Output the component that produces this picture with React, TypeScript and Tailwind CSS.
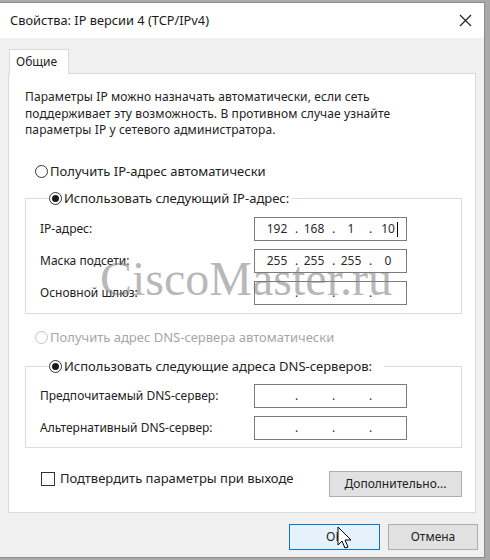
import React from "react";

const font = { fontFamily: '"Noto Sans", "Liberation Sans", Arial, sans-serif' };

function Radio({ checked, disabled }: { checked?: boolean; disabled?: boolean }) {
  return (
    <span
      className={`flex h-[13px] w-[13px] shrink-0 items-center justify-center rounded-full border ${
        disabled ? "border-[#c4c4c4]" : "border-[#333]"
      } bg-white`}
    >
      {checked && <span className="h-[7px] w-[7px] rounded-full bg-[#1a1a1a]" />}
    </span>
  );
}

function IpBox({ values, caret }: { values: string[]; caret?: boolean }) {
  return (
    <div className="flex h-[24px] w-[153px] items-center border border-[#7a7a7a] bg-white pl-[4px] text-[12px] text-[#2a2a2a]">
      {values.map((v, i) => (
        <React.Fragment key={i}>
          {i > 0 && <span className="w-[1px] text-center">.</span>}
          <span className="relative w-[36px] text-center">
            {v}
            {i === 3 && caret && (
              <span className="absolute right-[8px] top-[2px] h-[15px] w-px bg-black" />
            )}
          </span>
        </React.Fragment>
      ))}
    </div>
  );
}

function Row({ label, values, caret }: { label: string; values: string[]; caret?: boolean }) {
  return (
    <div className="grid h-[24px] grid-cols-[214px_153px] items-center">
      <span className="text-[12px] text-[#222]">{label}</span>
      <IpBox values={values} caret={caret} />
    </div>
  );
}

export default function App() {
  return (
    <div className="relative h-[560px] w-[490px] overflow-hidden bg-[#a9a9a9] pt-[2px]" style={font}>
      <div className="flex h-[556px] w-[485px] flex-col border border-l-0 border-[#8c8c8c] bg-[#f0f0f0]">
        {/* title bar */}
        <div className="flex h-[35px] items-center justify-between bg-white pl-[10px] pr-[12px]">
          <span className="text-[12.8px] text-[#1a1a1a]">Свойства: IP версии 4 (TCP/IPv4)</span>
          <svg width="13" height="13" viewBox="0 0 13 13">
            <path d="M1 1 L12 12 M12 1 L1 12" stroke="#222" strokeWidth="1.2" />
          </svg>
        </div>

        {/* body */}
        <div className="flex flex-1 flex-col pl-[8px] pr-[8px] pt-[11px]">
          <div className="flex">
            <div className="z-10 -mb-px ml-[1px] flex h-[25px] w-[60px] items-center border border-b-0 border-[#d9d9d9] bg-white pl-[6px] text-[12px] text-[#222]">
              Общие
            </div>
          </div>
          <div className="flex h-[440px] flex-col border border-[#d9d9d9] bg-white pl-[16px] pr-[13px] pt-[15px]">
            <p className="text-[12px] leading-[16.5px] tracking-[0.1px] text-[#222]">
              Параметры IP можно назначать автоматически, если сеть
              <br />
              поддерживает эту возможность. В противном случае узнайте
              <br />
              параметры IP у сетевого администратора.
            </p>

            <div className="ml-[10px] mt-[25px] flex h-[16px] items-center gap-[2px] text-[13px] text-[#222]">
              <Radio />
              <span>Получить IP-адрес автоматически</span>
            </div>

            <fieldset className="mt-[11px] border border-[#dcdcdc] pb-[8px] pl-[14px]">
              <legend className="ml-[9px] flex h-[16px] items-center gap-[2px] pr-[2px] text-[13px] text-[#222]">
                <Radio checked />
                <span>Использовать следующий IP-адрес:</span>
              </legend>
              <div className="flex flex-col gap-[8px] pt-[10px]">
                <Row label="IP-адрес:" values={["192", "168", "1", "10"]} caret />
                <Row label="Маска подсети:" values={["255", "255", "255", "0"]} />
                <Row label="Основной шлюз:" values={["", "", "", ""]} />
              </div>
            </fieldset>

            <div className="ml-[10px] mt-[16px] flex h-[16px] items-center gap-[2px] text-[13px] text-[#a6a6a6]">
              <Radio disabled />
              <span>Получить адрес DNS-сервера автоматически</span>
            </div>

            <fieldset className="mt-[13px] border border-[#dcdcdc] pb-[7px] pl-[14px]">
              <legend className="ml-[9px] flex h-[16px] items-center gap-[2px] pr-[12px] text-[13px] text-[#222]">
                <Radio checked />
                <span>Использовать следующие адреса DNS-серверов:</span>
              </legend>
              <div className="flex flex-col gap-[8px] pt-[9px]">
                <Row label="Предпочитаемый DNS-сервер:" values={["", "", "", ""]} />
                <Row label="Альтернативный DNS-сервер:" values={["", "", "", ""]} />
              </div>
            </fieldset>

            <div className="mt-[23px] flex items-start justify-between">
              <div className="ml-[16px] flex h-[16px] items-center gap-[5px] text-[13px] text-[#222]">
                <span className="h-[14px] w-[14px] shrink-0 border border-[#333] bg-white" />
                <span>Подтвердить параметры при выходе</span>
              </div>
              <button className="flex h-[26px] w-[133px] items-center justify-center border border-[#adadad] bg-[#e1e1e1] text-[12px] text-[#222]">
                Дополнительно...
              </button>
            </div>
          </div>

          <div className="-mr-[2px] mt-[11px] flex justify-end gap-[8px]">
            <button className="flex h-[26px] w-[91px] items-center justify-center border border-[#0078d7] bg-[#e5f1fb] text-[12px] text-[#222]">
              OK
            </button>
            <button className="flex h-[26px] w-[90px] items-center justify-center border border-[#adadad] bg-[#e1e1e1] text-[12px] text-[#222]">
              Отмена
            </button>
          </div>
        </div>
      </div>

      {/* watermark */}
      <div
        className="pointer-events-none absolute left-[100px] top-[255px] text-[48px] leading-none text-[#7f7f7f] opacity-55"
        style={{ fontFamily: '"Liberation Serif", "Times New Roman", serif' }}
      >
        CiscoMaster.ru
      </div>

      {/* mouse cursor */}
      <svg className="pointer-events-none absolute left-[337px] top-[526px]" width="16" height="26" viewBox="0 0 16 26">
        <path d="M1 1 L1 19 L5 15 L8 22 L11 21 L8 14 L14 14 Z" fill="white" stroke="black" strokeWidth="1" strokeLinejoin="round" />
      </svg>
    </div>
  );
}
